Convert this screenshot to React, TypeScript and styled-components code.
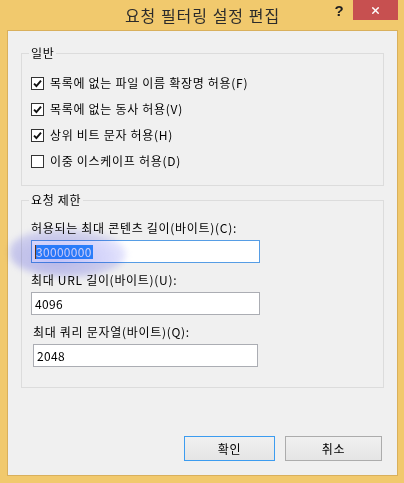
import styled, { createGlobalStyle } from "styled-components";
import { X } from "lucide-react";

const GlobalStyle = createGlobalStyle`
  html, body {
    margin: 0;
    padding: 0;
    background: #ffffff;
  }
  body {
    font-family: "Noto Sans CJK KR", "Liberation Sans", sans-serif;
    color: #000000;
  }
`;

const options = [
  { label: "목록에 없는 파일 이름 확장명 허용(F)", checked: true },
  { label: "목록에 없는 동사 허용(V)", checked: true },
  { label: "상위 비트 문자 허용(H)", checked: true },
  { label: "이중 이스케이프 허용(D)", checked: false },
];

const limits = [
  { label: "허용되는 최대 콘텐츠 길이(바이트)(C):", value: "30000000", focused: true },
  { label: "최대 URL 길이(바이트)(U):", value: "4096", focused: false },
  { label: "최대 쿼리 문자열(바이트)(Q):", value: "2048", focused: false, inset: true },
];

function CheckMark() {
  return (
    <svg width="9" height="9" viewBox="0 0 9 9">
      <path d="M1 4.6 L3.4 7 L8 1.6" fill="none" stroke="#111" strokeWidth="1.9" />
    </svg>
  );
}

export default function App() {
  return (
    <>
      <GlobalStyle />
      <Window>
        <TitleBar>
          <span />
          <Title>요청 필터링 설정 편집</Title>
          <Controls>
            <Help>?</Help>
            <CloseButton>
              <X size={11} strokeWidth={3} color="#ffffff" />
            </CloseButton>
          </Controls>
        </TitleBar>
        <Client>
          <Group>
            <Legend>일반</Legend>
            {options.map((opt) => (
              <CheckRow key={opt.label}>
                <Box>{opt.checked && <CheckMark />}</Box>
                <span>{opt.label}</span>
              </CheckRow>
            ))}
          </Group>
          <Group $second>
            <Legend>요청 제한</Legend>
            <Fields>
              {limits.map((f) => (
                <Field key={f.label} $inset={f.inset}>
                  <FieldLabel>{f.label}</FieldLabel>
                  <TextBox $focused={f.focused} $inset={f.inset}>
                    {f.focused ? (
                      <>
                        <Caret />
                        <Selected>{f.value}</Selected>
                      </>
                    ) : (
                      f.value
                    )}
                  </TextBox>
                </Field>
              ))}
            </Fields>
          </Group>
          <ButtonRow>
            <Button $primary $width={91}>확인</Button>
            <Button $width={97}>취소</Button>
          </ButtonRow>
        </Client>
        <Scribble />
      </Window>
    </>
  );
}

const Window = styled.div`
  position: relative;
  width: 404px;
  height: 483px;
  box-sizing: border-box;
  padding: 0 6px 7px 7px;
  background: #f1c96d;
  display: flex;
  flex-direction: column;
  overflow: hidden;
`;

const TitleBar = styled.div`
  height: 30px;
  flex: none;
  display: grid;
  grid-template-columns: 68px 1fr 68px;
  align-items: center;
`;

const Title = styled.div`
  text-align: center;
  font-size: 16px;
  line-height: 20px;
  letter-spacing: 1px;
  color: #2b2b2b;
  white-space: nowrap;
`;

const Controls = styled.div`
  align-self: start;
  display: flex;
  justify-content: flex-end;
  align-items: flex-start;
`;

const Help = styled.div`
  width: 14px;
  margin-right: 7px;
  margin-top: 3px;
  font-family: "Liberation Sans", sans-serif;
  font-weight: bold;
  font-size: 15px;
  line-height: 16px;
  color: #1f1f1f;
  text-align: center;
`;

const CloseButton = styled.div`
  width: 45px;
  height: 20px;
  background: #c75050;
  display: flex;
  align-items: center;
  justify-content: center;
`;

const Client = styled.div`
  flex: 1;
  background: #f0f0f0;
  border: 1px solid #d9b05c;
  padding: 14px 13px 14px 13px;
  display: flex;
  flex-direction: column;
`;

const Group = styled.fieldset<{ $second?: boolean }>`
  margin: ${(p) => (p.$second ? "6px" : "0")} 0 0 0;
  padding: 9px 9px ${(p) => (p.$second ? "20px" : "11px")} 9px;
  border: 1px solid #dcdcdc;
  min-width: 0;
  font-size: 12px;
  letter-spacing: 0.7px;
`;

const Legend = styled.legend`
  padding: 0 2px;
  margin-left: -2px;
  font-size: 12px;
  line-height: 16px;
  color: #000000;
`;

const CheckRow = styled.div`
  height: 26px;
  display: flex;
  align-items: center;
  gap: 6px;
  font-size: 12px;
  line-height: 16px;
  white-space: nowrap;
`;

const Box = styled.div`
  width: 13px;
  height: 13px;
  box-sizing: border-box;
  border: 1px solid #333333;
  background: #ffffff;
  display: flex;
  align-items: center;
  justify-content: center;
  flex: none;
`;

const Fields = styled.div`
  padding-top: 3px;
  display: flex;
  flex-direction: column;
  gap: 9px;
`;

const Field = styled.div<{ $inset?: boolean }>`
  display: flex;
  flex-direction: column;
  gap: 4px;
  padding-left: ${(p) => (p.$inset ? "2px" : "0")};
`;

const FieldLabel = styled.div`
  font-size: 12px;
  line-height: 16px;
  white-space: nowrap;
`;

const TextBox = styled.div<{ $focused?: boolean; $inset?: boolean }>`
  width: ${(p) => (p.$inset ? "225px" : "229px")};
  height: 23px;
  box-sizing: border-box;
  border: 1px solid ${(p) => (p.$focused ? "#569de5" : "#abadb3")};
  background: #ffffff;
  padding: 0 3px;
  display: flex;
  align-items: center;
  font-size: 12px;
  line-height: 16px;
  letter-spacing: 0.3px;
  color: #000000;
`;

const Caret = styled.span`
  width: 1px;
  height: 14px;
  background: #7a3f10;
`;

const Selected = styled.span`
  background: #3399ff;
  color: #ffffff;
  line-height: 14px;
  padding-right: 1px;
`;

const ButtonRow = styled.div`
  margin-top: auto;
  padding-right: 2px;
  display: flex;
  justify-content: flex-end;
  gap: 10px;
`;

const Button = styled.div<{ $primary?: boolean; $width: number }>`
  width: ${(p) => p.$width}px;
  height: 25px;
  box-sizing: border-box;
  border: 1px solid ${(p) => (p.$primary ? "#3c9cf0" : "#acacac")};
  background: linear-gradient(#f0f0f0, #e5e5e5);
  display: flex;
  align-items: center;
  justify-content: center;
  font-size: 12px;
  line-height: 16px;
  letter-spacing: 0.7px;
  color: #000000;
`;

const Scribble = styled.div`
  position: absolute;
  left: 10px;
  top: 229px;
  width: 116px;
  height: 48px;
  border-radius: 45% 55% 50% 50%;
  background: radial-gradient(ellipse at 40% 60%, rgba(140, 140, 240, 0.55), rgba(160, 160, 245, 0.4) 55%, rgba(180, 180, 250, 0) 100%);
  filter: blur(3px);
  mix-blend-mode: multiply;
  pointer-events: none;
`;
